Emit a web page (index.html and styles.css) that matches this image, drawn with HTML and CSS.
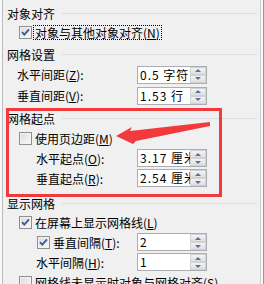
FILE: index.html
```html
<!DOCTYPE html>
<html lang="zh-CN">

<head>
    <meta charset="UTF-8">
    <meta name="viewport" content="width=device-width, initial-scale=1.0">
    <title>网格设置</title>
    <link rel="stylesheet" href="styles.css">
</head>

<body>
    <div class="dialog">
        <!-- 对象对齐 -->
        <div class="group">
            <div class="group-title">对象对齐</div>
            <div class="row row-short indent-1">
                <span class="checkbox checked">
                    <svg viewBox="0 0 11 11" width="11" height="11"><path d="M2 5.2 L4.3 7.6 L9 2.4" /></svg>
                </span>
                <span class="focus">对象与其他对象对齐(<u>N</u>)</span>
            </div>
        </div>

        <!-- 网格设置 -->
        <div class="group group-2">
            <div class="group-title">网格设置</div>
            <div class="row row-tall">
                <span class="field-label pad-14">水平间距(<u>Z</u>):</span>
                <div class="spin">
                    <span class="spin-value">0.5 字符</span>
                    <span class="spin-btns"><span class="up"></span><span class="down"></span></span>
                </div>
            </div>
            <div class="row row-tall">
                <span class="field-label pad-14">垂直间距(<u>V</u>):</span>
                <div class="spin">
                    <span class="spin-value">1.53 行</span>
                    <span class="spin-btns"><span class="up"></span><span class="down"></span></span>
                </div>
            </div>
        </div>

        <!-- 网格起点 -->
        <div class="group group-3">
            <div class="group-title">网格起点</div>
            <div class="row indent-1">
                <span class="checkbox"></span>
                <span>使用页边距(<u>M</u>)</span>
            </div>
            <div class="row">
                <span class="field-label pad-33">水平起点(<u>O</u>):</span>
                <div class="spin">
                    <span class="spin-value">3.17 厘米</span>
                    <span class="spin-btns"><span class="up"></span><span class="down"></span></span>
                </div>
            </div>
            <div class="row">
                <span class="field-label pad-33">垂直起点(<u>R</u>):</span>
                <div class="spin">
                    <span class="spin-value">2.54 厘米</span>
                    <span class="spin-btns"><span class="up"></span><span class="down"></span></span>
                </div>
            </div>
        </div>

        <!-- 显示网格 -->
        <div class="group group-4">
            <div class="group-title">显示网格</div>
            <div class="row row-short indent-1">
                <span class="checkbox checked">
                    <svg viewBox="0 0 11 11" width="11" height="11"><path d="M2 5.2 L4.3 7.6 L9 2.4" /></svg>
                </span>
                <span>在屏幕上显示网格线(<u>L</u>)</span>
            </div>
            <div class="row">
                <span class="field-label pad-34">
                    <span class="checkbox checked">
                        <svg viewBox="0 0 11 11" width="11" height="11"><path d="M2 5.2 L4.3 7.6 L9 2.4" /></svg>
                    </span>
                    <span>垂直间隔(<u>T</u>):</span>
                </span>
                <div class="spin">
                    <span class="spin-value">2</span>
                    <span class="spin-btns"><span class="up"></span><span class="down"></span></span>
                </div>
            </div>
            <div class="row">
                <span class="field-label pad-33">水平间隔(<u>H</u>):</span>
                <div class="spin">
                    <span class="spin-value">1</span>
                    <span class="spin-btns"><span class="up"></span><span class="down"></span></span>
                </div>
            </div>
            <div class="row indent-1">
                <span class="checkbox"></span>
                <span>网格线未显示时对象与网格对齐(<u>S</u>)</span>
            </div>
        </div>
    </div>
    <div class="edge"></div>

    <!-- annotation drawn over the dialog -->
    <div class="mark-box"></div>
    <svg class="mark-arrow" width="264" height="284" viewBox="0 0 264 284">
        <polygon points="116,136 132,127 130,131 210,122 210,126 136,141 133,144" />
    </svg>
</body>

</html>
```

FILE: styles.css
```css
* {
    margin: 0;
    padding: 0;
    box-sizing: border-box;
}

body {
    position: relative;
    width: 264px;
    height: 284px;
    overflow: hidden;
    display: flex;
    background: #f8f8f8;
    font-family: "Noto Sans CJK SC", sans-serif;
    font-size: 12px;
    color: #000;
}

.dialog {
    width: 259px;
    margin-left: 2px;
    padding-top: 3px;
    background: #f0f0f0;
    border-left: 1px solid #b9bdc2;
    border-right: 1px solid #c9cdd2;
}

.edge {
    width: 3px;
    border-right: 1px solid #7f9cc4;
}

.group-2,
.group-3 {
    margin-top: 2px;
}

.group-4 {
    margin-top: 5px;
}

.group-title {
    display: flex;
    align-items: center;
    height: 20px;
    padding-left: 4px;
    padding-right: 3px;
    white-space: nowrap;
}

.group-title::after {
    content: "";
    flex: 1;
    height: 1px;
    margin-left: 7px;
    background: #d5dfe5;
}

.row {
    display: flex;
    align-items: center;
    height: 20px;
    white-space: nowrap;
}

.row-short {
    height: 19px;
}

.row-tall {
    height: 21px;
}

.indent-1 {
    padding-left: 16px;
}

.field-label {
    display: flex;
    align-items: center;
    width: 134px;
}

.pad-14 {
    padding-left: 14px;
}

.pad-33 {
    padding-left: 33px;
}

.pad-34 {
    padding-left: 34px;
}

u {
    text-decoration: underline;
    text-underline-offset: 1px;
}

/* checkbox */
.checkbox {
    display: flex;
    align-items: center;
    justify-content: center;
    width: 13px;
    height: 13px;
    margin-right: 3px;
    border: 1px solid #8e8f8f;
    background: linear-gradient(135deg, #d9d9d9, #fafafa);
    box-shadow: inset 0 0 0 1px #f2f2f2;
    flex-shrink: 0;
}

.checkbox svg path {
    fill: none;
    stroke: #3c5a9c;
    stroke-width: 1.9;
}

.focus {
    margin-left: -2px;
    padding: 0 1px;
    line-height: 13px;
    border: 1px dotted #000;
}

/* spin box */
.spin {
    display: flex;
    width: 70px;
    height: 18px;
    border: 1px solid #abadb3;
    background: #fff;
}

.spin-value {
    flex: 1;
    overflow: hidden;
    padding-left: 2px;
    line-height: 16px;
    letter-spacing: 1px;
}

.spin-btns {
    display: flex;
    flex-direction: column;
    width: 16px;
    flex-shrink: 0;
}

.spin-btns span {
    flex: 1;
    display: flex;
    align-items: center;
    justify-content: center;
    border: 1px solid #d2d2d2;
    background: linear-gradient(#f4f4f4, #dedede);
}

.spin-btns .up::after {
    content: "";
    border-left: 3px solid transparent;
    border-right: 3px solid transparent;
    border-bottom: 3px solid #5470a4;
}

.spin-btns .down::after {
    content: "";
    border-left: 3px solid transparent;
    border-right: 3px solid transparent;
    border-top: 3px solid #5470a4;
}

/* red annotation */
.mark-box {
    position: absolute;
    left: 6px;
    top: 108px;
    width: 216px;
    height: 89px;
    border: 3px solid #f23a3c;
}

.mark-arrow {
    position: absolute;
    left: 0;
    top: 0;
}

.mark-arrow polygon {
    fill: #f23a3c;
}
```
